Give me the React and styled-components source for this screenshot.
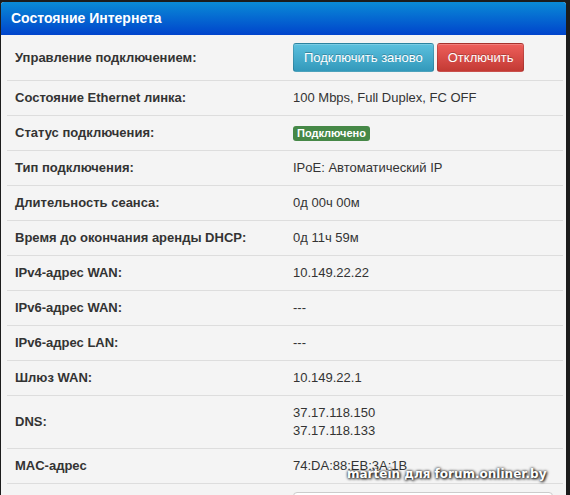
import React from "react";
import styled, { createGlobalStyle } from "styled-components";

const GlobalStyle = createGlobalStyle`
  body {
    margin: 0;
    background: #1c1c1c;
    font-family: "Liberation Sans", Arial, sans-serif;
    overflow: hidden;
  }
`;

const Page = styled.div`
  position: relative;
  padding: 2px 4px 0 1px;
`;

const Panel = styled.div`
  background: #f4f4f4;
  border-radius: 3px 3px 0 0;
  overflow: hidden;
`;

const PanelHeader = styled.div`
  height: 33px;
  line-height: 33px;
  padding: 0 10px;
  color: #ffffff;
  font-size: 14px;
  font-weight: bold;
  background: linear-gradient(to bottom, #0a8bd6, #0044cc);
`;

const Table = styled.div`
  margin: 0 3px 0 6px;
`;

const Row = styled.div`
  display: grid;
  grid-template-columns: 278px 1fr;
  align-items: center;
  border-bottom: 1px solid #dddddd;

  &:last-child {
    border-bottom: none;
  }
`;

const Label = styled.div`
  padding: 8px;
  font-size: 13px;
  line-height: 18px;
  font-weight: bold;
  color: #333333;
`;

const Value = styled.div`
  padding: 8px;
  font-size: 13px;
  line-height: 18px;
  color: #333333;
`;

const ButtonGroup = styled.div`
  display: flex;
  gap: 3px;
`;

const Button = styled.button`
  height: 29px;
  padding: 0 10px;
  font-family: "Liberation Sans", Arial, sans-serif;
  font-size: 13px;
  color: #ffffff;
  text-shadow: 0 -1px 0 rgba(0, 0, 0, 0.25);
  border: 1px solid rgba(0, 0, 0, 0.15);
  border-radius: 3px;
  background: ${(p) =>
    p.$kind === "danger"
      ? "linear-gradient(to bottom, #ee5f5b, #c33a34)"
      : "linear-gradient(to bottom, #5bc0de, #3399bb)"};
  box-shadow: inset 0 1px 0 rgba(255, 255, 255, 0.2);
`;

const Badge = styled.span`
  display: inline-block;
  padding: 1px 4px;
  font-size: 11px;
  line-height: 13px;
  font-weight: bold;
  color: #ffffff;
  background: #468847;
  border-radius: 3px;
`;

const Select = styled.div`
  height: 28px;
  width: 260px;
  box-sizing: border-box;
  background: #ffffff;
  border: 1px solid #cccccc;
  border-radius: 4px;
`;

const Watermark = styled.div`
  position: absolute;
  left: 347px;
  top: 467px;
  font-family: "DejaVu Sans", Verdana, sans-serif;
  font-size: 12px;
  font-weight: bold;
  color: #ffffff;
  white-space: nowrap;
  text-shadow: 0 0 3px #000, 1px 1px 3px #000;
`;

const rows = [
  ["Состояние Ethernet линка:", "100 Mbps, Full Duplex, FC OFF"],
  ["Статус подключения:", <Badge>Подключено</Badge>],
  ["Тип подключения:", "IPoE: Автоматический IP"],
  ["Длительность сеанса:", "0д 00ч 00м"],
  ["Время до окончания аренды DHCP:", "0д 11ч 59м"],
  ["IPv4-адрес WAN:", "10.149.22.22"],
  ["IPv6-адрес WAN:", "---"],
  ["IPv6-адрес LAN:", "---"],
  ["Шлюз WAN:", "10.149.22.1"],
  [
    "DNS:",
    <>
      37.17.118.150
      <br />
      37.17.118.133
    </>,
  ],
  ["MAC-адрес", "74:DA:88:EB:3A:1B"],
];

export default function App() {
  return (
    <>
      <GlobalStyle />
      <Page>
        <Panel>
          <PanelHeader>Состояние Интернета</PanelHeader>
          <Table>
            <Row>
              <Label>Управление подключением:</Label>
              <Value>
                <ButtonGroup>
                  <Button>Подключить заново</Button>
                  <Button $kind="danger">Отключить</Button>
                </ButtonGroup>
              </Value>
            </Row>
            {rows.map(([label, value], i) => (
              <Row key={i}>
                <Label>{label}</Label>
                <Value>{value}</Value>
              </Row>
            ))}
            <Row>
              <Label />
              <Value>
                <Select />
              </Value>
            </Row>
          </Table>
        </Panel>
        <Watermark>martein для forum.onliner.by</Watermark>
      </Page>
    </>
  );
}
